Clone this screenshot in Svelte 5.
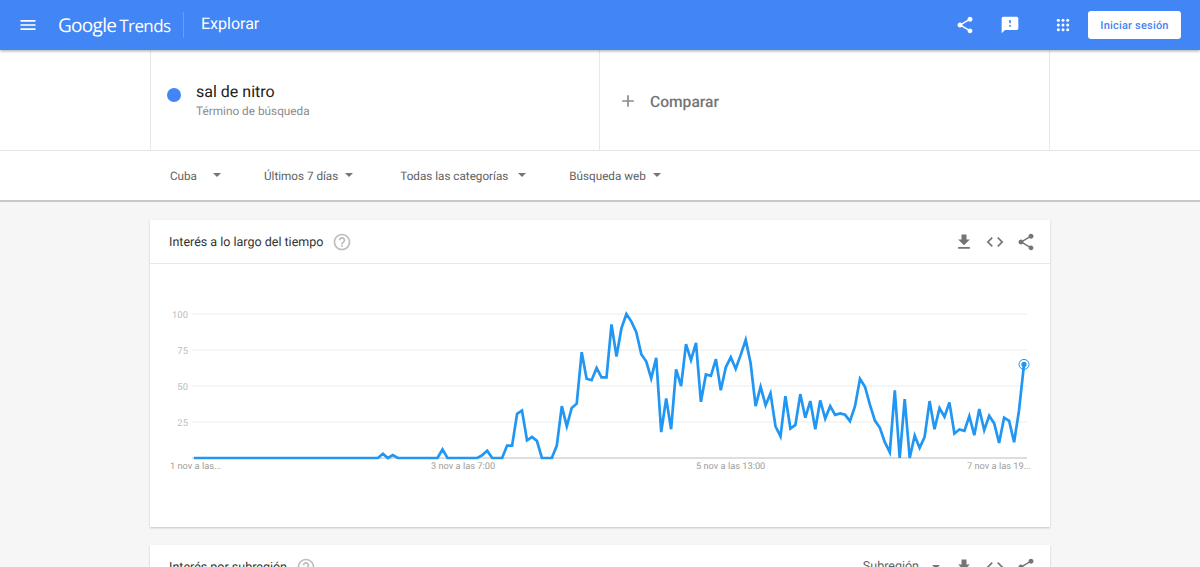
<script>
  const icons = {
    menu: "M3 18h18v-2H3v2zm0-5h18v-2H3v2zm0-7v2h18V6H3z",
    share:
      "M18 16.08c-.76 0-1.44.3-1.96.77L8.91 12.7c.05-.23.09-.46.09-.7s-.04-.47-.09-.7l7.05-4.11c.54.5 1.25.81 2.04.81 1.66 0 3-1.34 3-3s-1.34-3-3-3-3 1.34-3 3c0 .24.04.47.09.7L8.04 9.81C7.5 9.31 6.79 9 6 9c-1.66 0-3 1.34-3 3s1.34 3 3 3c.79 0 1.5-.31 2.04-.81l7.12 4.16c-.05.21-.08.43-.08.65 0 1.61 1.31 2.92 2.92 2.92 1.61 0 2.92-1.31 2.92-2.92s-1.31-2.92-2.92-2.92z",
    feedback:
      "M20 2H4c-1.1 0-1.99.9-1.99 2L2 22l4-4h14c1.1 0 2-.9 2-2V4c0-1.1-.9-2-2-2zm-7 12h-2v-2h2v2zm0-4h-2V6h2v4z",
    download: "M19 9h-4V3H9v6H5l7 7 7-7zM5 18v2h14v-2H5z",
    code: "M9.4 16.6L4.8 12l4.6-4.6L8 6l-6 6 6 6 1.4-1.4zm5.2 0l4.6-4.6-4.6-4.6L16 6l6 6-6 6-1.4-1.4z",
    help: "M11 18h2v-2h-2v2zm1-16C6.48 2 2 6.48 2 12s4.48 10 10 10 10-4.48 10-10S17.52 2 12 2zm0 18c-4.41 0-8-3.59-8-8s3.59-8 8-8 8 3.59 8 8-3.59 8-8 8zm0-14c-2.21 0-4 1.79-4 4h2c0-1.1.9-2 2-2s2 .9 2 2c0 2-3 1.75-3 5h2c0-2.25 3-2.5 3-5 0-2.21-1.79-4-4-4z",
    plus: "M19 13h-6v6h-2v-6H5v-2h6V5h2v6h6v2z",
  };

  // gap = text to caret, after = caret to next filter
  const filters = [
    { label: "Cuba", gap: 16, after: 43 },
    { label: "Últimos 7 días", gap: 7, after: 47 },
    { label: "Todas las categorías", gap: 10, after: 43 },
    { label: "Búsqueda web", gap: 7, after: 0 },
  ];

  // hourly values, 168 points
  const values = [
    ...Array(38).fill(0), 3, 0, 2, ...Array(9).fill(0), 6, ...Array(7).fill(0),
    2, 5, 0, 0, 0, 8.6, 8.6, 30.7, 33, 12.3, 14.6, 11.9, 0, 0, 0, 8.6, 36, 22,
    34.7, 37.7, 73.5, 55, 54, 62.6, 56, 56, 92.8, 70.5, 90, 100, 94.7, 87.4, 72,
    67, 55.3, 69.5, 18, 41.4, 20, 61.6, 50, 79, 68, 80, 39, 58, 57, 68.6, 47, 63,
    70, 62, 71.6, 82, 66, 36, 49.5, 36.7, 45, 22, 15, 43, 20.5, 23, 44.4, 28,
    39.5, 20, 40, 27.4, 36, 30, 31, 30, 25.6, 36, 55, 49.5, 37, 26, 21, 11, 4, 47,
    0, 41, 0, 15.6, 7, 14.6, 39.5, 20, 34.6, 28.6, 38.6, 17, 19.8, 18.8, 29, 15.8,
    34, 19.3, 29.3, 24, 10.5, 28, 25.8, 11, 33, 65,
  ];

  // chart coordinates are relative to the card's left edge and the chart top
  const x0 = 44;
  const step = 830 / 167;
  const yZero = 194;
  const yScale = 1.44;
  const px = (i) => x0 + i * step;
  const py = (v) => yZero - v * yScale;
  const line = values.map((v, i) => `${px(i).toFixed(1)},${py(v).toFixed(1)}`).join(" ");
  const grid = [100, 75, 50, 25];
  const xLabels = [
    { text: "1 nov a las...", x: 20 },
    { text: "3 nov a las 7:00", x: 281 },
    { text: "5 nov a las 13:00", x: 546 },
    { text: "7 nov a las 19...", x: 817 },
  ];
  const last = values.length - 1;
</script>

{#snippet icon(name, size, cls)}
  <svg class={cls} width={size} height={size} viewBox="0 0 24 24" fill="currentColor"><path d={icons[name]} /></svg>
{/snippet}

{#snippet actions()}
  {@render icon("download", 20, "tool")}
  {@render icon("code", 20, "tool")}
  {@render icon("share", 20, "tool")}
{/snippet}

<div class="page">
  <header class="topbar">
    <div class="brand">
      {@render icon("menu", 20, "menu")}
      <div class="logo"><span class="google">Google</span><span class="trends">Trends</span></div>
      <div class="sep"></div>
      <div class="title">Explorar</div>
    </div>
    <div class="top-actions">
      {@render icon("share", 20, "top-share")}
      {@render icon("feedback", 20, "top-feedback")}
      <svg class="top-apps" width="14" height="14" viewBox="0 0 14 14" fill="currentColor">
        {#each [0, 1, 2] as r}
          {#each [0, 1, 2] as c}
            <circle cx={2.3 + c * 4.7} cy={2.3 + r * 4.7} r="1.5" />
          {/each}
        {/each}
      </svg>
      <button class="signin">Iniciar sesión</button>
    </div>
  </header>

  <section class="terms">
    <div class="terms-inner">
      <div class="term">
        <span class="dot"></span>
        <div>
          <div class="term-name">sal de nitro</div>
          <div class="term-sub">Término de búsqueda</div>
        </div>
      </div>
      <div class="compare">
        {@render icon("plus", 20, "plus")}
        <span>Comparar</span>
      </div>
    </div>
  </section>

  <nav class="filters">
    {#each filters as f}
      <div class="filter" style="margin-right: {f.after}px">
        <span>{f.label}</span>
        <span class="caret" style="margin-left: {f.gap}px"></span>
      </div>
    {/each}
  </nav>

  <section class="card first">
    <div class="card-head">
      <div class="card-title">Interés a lo largo del tiempo</div>
      {@render icon("help", 20, "help")}
      <div class="spacer"></div>
      {@render actions()}
    </div>
    <svg class="chart" width="900" height="262" viewBox="0 0 900 262">
      {#each grid as g}
        <line x1="42" x2="877" y1={py(g)} y2={py(g)} class="gridline" />
        <text x="38" y={py(g) + 3.5} class="ylabel">{g}</text>
      {/each}
      <line x1="42" x2="877" y1={yZero} y2={yZero} class="baseline" />
      {#each xLabels as l}
        <text x={l.x} y={yZero + 11} class="xlabel">{l.text}</text>
      {/each}
      <polyline points={line} class="series" />
      <circle cx={px(last)} cy={py(values[last])} r="5" class="halo" />
      <circle cx={px(last)} cy={py(values[last])} r="2.6" class="point" />
    </svg>
  </section>

  <section class="card second">
    <div class="card-head">
      <div class="card-title">Interés por subregión</div>
      {@render icon("help", 20, "help")}
      <div class="spacer"></div>
      <span class="region">Subregión</span>
      <span class="caret region-caret"></span>
      {@render actions()}
    </div>
  </section>
</div>

<style>
  :global(body) {
    margin: 0;
    background: #f6f6f6;
  }

  .page {
    height: 567px;
    overflow: hidden;
    font-family: Roboto, sans-serif;
    background: #f6f6f6;
    text-rendering: geometricPrecision;
  }

  .topbar {
    position: relative;
    z-index: 2;
    height: 50px;
    background: #4285f4;
    box-shadow: 0 1px 3px rgba(0, 0, 0, 0.35);
    display: flex;
    align-items: center;
    justify-content: space-between;
    color: #fff;
  }

  .brand {
    display: flex;
    align-items: center;
  }

  .menu {
    margin-left: 18px;
  }

  .logo {
    margin-left: 20px;
    width: 111px;
    white-space: nowrap;
    color: #fff;
    font-family: "Open Sans", sans-serif;
    font-size: 19px;
    letter-spacing: -0.7px;
  }

  .trends {
    margin-left: 3px;
    font-size: 17px;
    letter-spacing: -0.6px;
  }

  .sep {
    width: 1px;
    height: 26px;
    margin-left: 14px;
    background: rgba(255, 255, 255, 0.2);
  }

  .title {
    margin: -3px 0 0 17px;
    font-size: 16px;
  }

  .top-actions {
    display: flex;
    align-items: center;
  }

  .top-apps {
    margin-left: 36px;
  }

  .top-feedback {
    margin-left: 25px;
  }

  .signin {
    margin: 0 19px 0 18px;
    width: 93px;
    height: 28px;
    padding: 0;
    border: none;
    border-radius: 3px;
    background: #fff;
    color: #4285f4;
    font-family: Roboto, sans-serif;
    font-size: 11px;
    font-weight: 500;
    letter-spacing: 0.2px;
    text-rendering: geometricPrecision;
  }

  .terms {
    height: 100px;
    background: #fff;
    border-bottom: 1px solid #e4e4e4;
  }

  .terms-inner {
    box-sizing: border-box;
    width: 900px;
    height: 100%;
    margin: 0 auto;
    display: grid;
    grid-template-columns: 1fr 1fr;
    border-left: 1px solid #e8e8e8;
    border-right: 1px solid #e8e8e8;
  }

  .term {
    display: flex;
    align-items: center;
    padding: 2px 0 0 16px;
    gap: 15px;
    border-right: 1px solid #e8e8e8;
  }

  .dot {
    width: 14px;
    height: 14px;
    border-radius: 50%;
    background: #4285f4;
    margin-top: -12px;
  }

  .term-name {
    font-size: 16px;
    color: #212121;
    line-height: 20px;
  }

  .term-sub {
    font-size: 11.8px;
    color: #8c8c8c;
    line-height: 18px;
  }

  .compare {
    display: flex;
    align-items: center;
    gap: 12px;
    padding: 3px 0 0 18px;
    font-size: 15.6px;
    font-weight: 500;
    color: #757575;
  }

  .plus {
    color: #8a8a8a;
    margin-top: -2px;
  }

  .filters {
    box-sizing: border-box;
    height: 51px;
    padding-left: 170px;
    background: #fff;
    border-bottom: 2px solid #c8c8c8;
    display: flex;
    align-items: center;
    font-size: 11.7px;
    color: #616161;
  }

  .filter {
    display: flex;
    align-items: center;
  }

  .caret {
    width: 0;
    height: 0;
    margin-top: -1px;
    border-left: 4px solid transparent;
    border-right: 4px solid transparent;
    border-top: 4px solid #757575;
  }

  .card {
    width: 900px;
    margin: 0 auto;
    background: #fff;
    box-shadow: 0 1px 2px rgba(0, 0, 0, 0.2);
  }

  .first {
    margin-top: 18px;
    height: 307px;
  }

  .second {
    margin-top: 18px;
    height: 200px;
  }

  .card-head {
    height: 44px;
    box-sizing: border-box;
    padding: 0 14px 0 19px;
    border-bottom: 1px solid #e8e8e8;
    display: flex;
    align-items: center;
    color: #757575;
  }

  .card-title {
    font-size: 12.5px;
    color: #333;
    margin: 1px 9px 0 0;
  }

  .spacer {
    flex: 1;
  }

  .card-head :global(.help) {
    color: #bdbdbd;
  }

  .card-head :global(.tool) {
    margin-left: 11px;
  }

  .region {
    font-size: 12.5px;
    color: #616161;
  }

  .region-caret {
    margin: 0 3px 0 13px;
  }

  .chart {
    display: block;
  }

  .gridline {
    stroke: #ececec;
    stroke-width: 1;
  }

  .baseline {
    stroke: #bdbdbd;
    stroke-width: 1;
  }

  .ylabel {
    font-size: 9.5px;
    fill: #bdbdbd;
    text-anchor: end;
  }

  .xlabel {
    font-size: 9.25px;
    fill: #9e9e9e;
  }

  .series {
    fill: none;
    stroke: #2196f3;
    stroke-width: 2.7;
    stroke-linejoin: miter;
  }

  .halo {
    fill: none;
    stroke: #2196f3;
    stroke-width: 1;
  }

  .point {
    fill: #2196f3;
  }
</style>
